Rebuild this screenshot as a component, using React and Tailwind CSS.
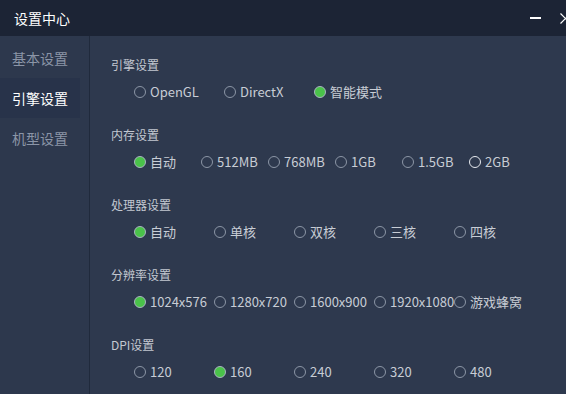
import { useState } from 'react'

const font = { fontFamily: '"Noto Sans CJK SC", "Noto Sans", sans-serif' }

const sideItems = ['基本设置', '引擎设置', '机型设置']

const sections = [
  { title: '引擎设置', width: 'w-[90px]', options: ['OpenGL', 'DirectX', '智能模式'], checked: 2 },
  { title: '内存设置', width: 'w-[67px]', options: ['自动', '512MB', '768MB', '1GB', '1.5GB', '2GB'], checked: 0, hover: 5 },
  { title: '处理器设置', width: 'w-[80px]', options: ['自动', '单核', '双核', '三核', '四核'], checked: 0 },
  { title: '分辨率设置', width: 'w-[80px]', options: ['1024x576', '1280x720', '1600x900', '1920x1080', '游戏蜂窝'], checked: 0 },
  { title: 'DPI设置', width: 'w-[80px]', options: ['120', '160', '240', '320', '480'], checked: 1 },
]

function Radio({ on, hover }) {
  if (on) {
    return <span className="size-[12px] shrink-0 rounded-full border border-[#a9b3c0] bg-[#4ac24a]" />
  }
  return (
    <span
      className={`size-[12px] shrink-0 rounded-full ${hover ? 'border-[1.5px] border-[#e6e9ee]' : 'border border-[#8c96a6]'}`}
    />
  )
}

export default function App() {
  const [active] = useState(1)
  return (
    <div className="flex h-[394px] w-[566px] flex-col overflow-hidden bg-[#2e394e]" style={font}>
      <div className="flex h-9 shrink-0 items-center bg-[#1c2435] pl-[14px] text-[14px] text-white">
        <span>设置中心</span>
        <div className="ml-auto mr-[-5px] flex items-center">
          <span className="h-[1.5px] w-[11px] bg-white" />
          <svg className="ml-[19px]" width="11" height="11" viewBox="0 0 11 11" fill="none" stroke="white" strokeWidth="1.2">
            <path d="M0.5 0.5 L10.5 10.5 M10.5 0.5 L0.5 10.5" />
          </svg>
        </div>
      </div>
      <div className="flex flex-1">
        <aside className="w-[90px] shrink-0 border-r border-[#202a3c] bg-[#2d384d] pt-[2px]">
          {sideItems.map((item, i) => (
            <div
              key={item}
              className={`flex h-10 w-[80px] items-center pl-[12px] text-[14px] ${
                i === active ? 'bg-[#28334a] text-white' : 'text-[#8b95a7]'
              }`}
            >
              {item}
            </div>
          ))}
        </aside>
        <main className="flex-1 pt-[21px]">
          {sections.map((s) => (
            <section key={s.title} className="mb-[27px] pl-[21px]">
              <div className="h-4 text-[12px] leading-4 text-[#c3c8d1]">{s.title}</div>
              <div className="mt-[11px] flex h-4 items-center pl-[23px]">
                {s.options.map((opt, i) => (
                  <div key={opt} className={`flex shrink-0 items-center ${s.width}`}>
                    <Radio on={i === s.checked} hover={i === s.hover} />
                    <span className="ml-[4px] whitespace-nowrap text-[13px] leading-4 text-[#c8cdd5]">{opt}</span>
                  </div>
                ))}
              </div>
            </section>
          ))}
        </main>
      </div>
    </div>
  )
}
